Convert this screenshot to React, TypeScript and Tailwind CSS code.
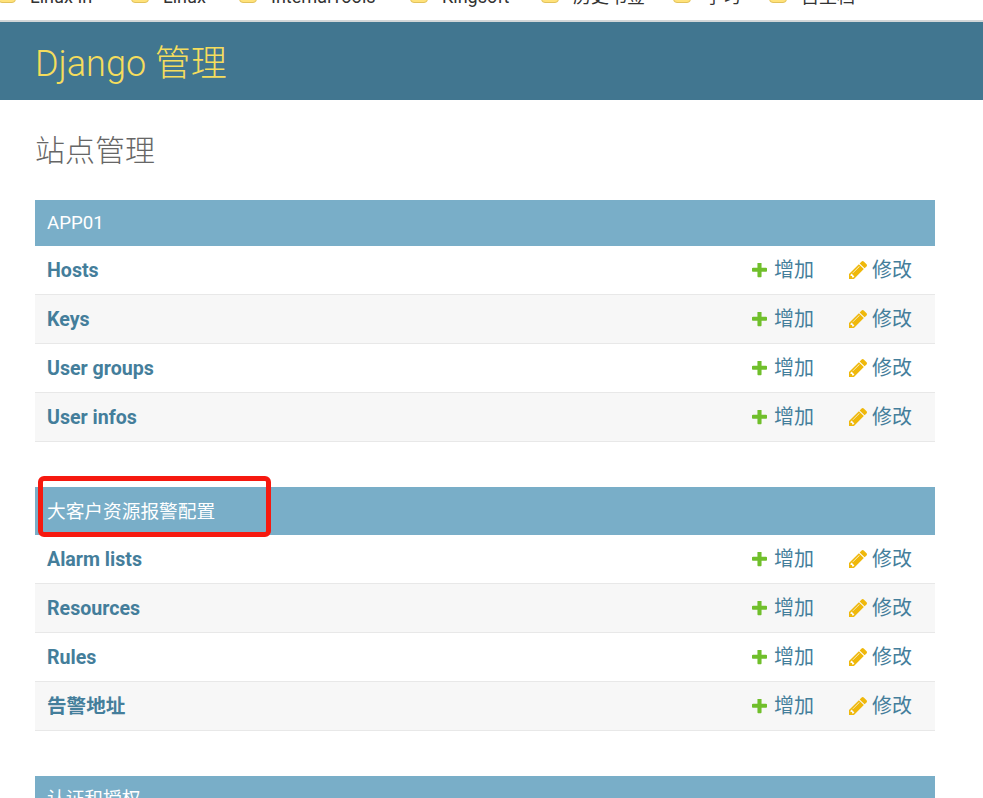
const sans = "font-['Roboto','Noto_Sans_CJK_SC',sans-serif]";

function Plus() {
  return (
    <svg width="15" height="15" viewBox="192 192 1408 1408" className="shrink-0">
      <path d="M1600 736v192q0 40-28 68t-68 28h-416v416q0 40-28 68t-68 28h-192q-40 0-68-28t-28-68v-416h-416q-40 0-68-28t-28-68v-192q0-40 28-68t68-28h416v-416q0-40 28-68t68-28h192q40 0 68 28t28 68v416h416q40 0 68 28t28 68z" fill="#70bf2b" />
    </svg>
  );
}

function Pencil() {
  return (
    <svg width="18" height="18" viewBox="128 149 1515 1515" className="shrink-0">
      <path d="M491 1536l91-91-235-235-91 91v107h128v128h107zm523-928q0-22-22-22-10 0-17 7l-542 542q-7 7-7 17 0 22 22 22 10 0 17-7l542-542q7-7 7-17zm-54-192l416 416-832 832h-416v-416zm683 96q0 53-37 90l-166 166-416-416 166-165q36-38 90-38 53 0 91 38l235 234q37 39 37 91z" fill="#efb80b" />
    </svg>
  );
}

function Row({ name, alt }: { name: string; alt?: boolean }) {
  return (
    <div className={`flex h-[49px] items-center border-b border-[#e8e8e8] pl-3 ${alt ? "bg-[#f7f7f7]" : "bg-white"}`}>
      <span className="flex-1 pt-[2px] text-[19.6px] font-bold text-[#447e9b]">{name}</span>
      <span className="flex w-[97px] items-center gap-[7px] text-[20px] text-[#447e9b]"><Plus />增加</span>
      <span className="flex w-[86px] items-center gap-[5px] text-[20px] text-[#447e9b]"><Pencil />修改</span>
    </div>
  );
}

function Group({ title, rows, tall }: { title: string; rows: string[]; tall?: boolean }) {
  return (
    <section className="mb-[45px]">
      <div className={`flex items-center bg-[#79aec8] pl-3 text-[18.7px] text-white ${tall ? "h-[48px] pt-[2px]" : "h-[46px]"}`}>{title}</div>
      {rows.map((r, i) => <Row key={r} name={r} alt={i % 2 === 1} />)}
    </section>
  );
}

const bookmarks: [string, number][] = [
  ["Linux-in", 133], ["Linux", 108], ["InternalTools", 171], ["Kingsoft", 131], ["历史书签", 132], ["学习", 96], ["自主档", 100],
];

export default function App() {
  return (
    <div className={`h-[798px] w-[983px] overflow-hidden bg-white ${sans}`}>
      <div className="-ml-[2px] flex h-[20px] items-end overflow-hidden pb-[14px]">
        {bookmarks.map(([b, w]) => (
          <div key={b} className="flex shrink-0 items-end gap-[14px] text-[18px] leading-none text-[#333]" style={{ width: w }}>
            <span className="mb-[3px] h-[14px] w-[18px] shrink-0 rounded-sm border border-[#e2c25c] bg-[#ffe27a]" />
            {b}
          </div>
        ))}
      </div>
      <div className="border-t-2 border-[#d2d6d8]" />
      <header className="flex h-[78px] items-center bg-[#417690] pt-[5px] pl-[35px] text-[36px] font-light text-[#f5dd5d]">Django 管理</header>
      <main className="px-[35px] pr-[48px]">
        <h1 className="mt-[29px] mb-[27px] text-[30px] leading-[44px] font-light text-[#666]">站点管理</h1>
        <Group title="APP01" rows={["Hosts", "Keys", "User groups", "User infos"]} />
        <Group title="大客户资源报警配置" tall rows={["Alarm lists", "Resources", "Rules", "告警地址"]} />
        <Group title="认证和授权" rows={["Users"]} />
      </main>
      <div className="pointer-events-none absolute left-[38px] top-[476px] h-[61px] w-[233px] rounded-[6px] border-[5px] border-[#f6190f]" />
    </div>
  );
}
